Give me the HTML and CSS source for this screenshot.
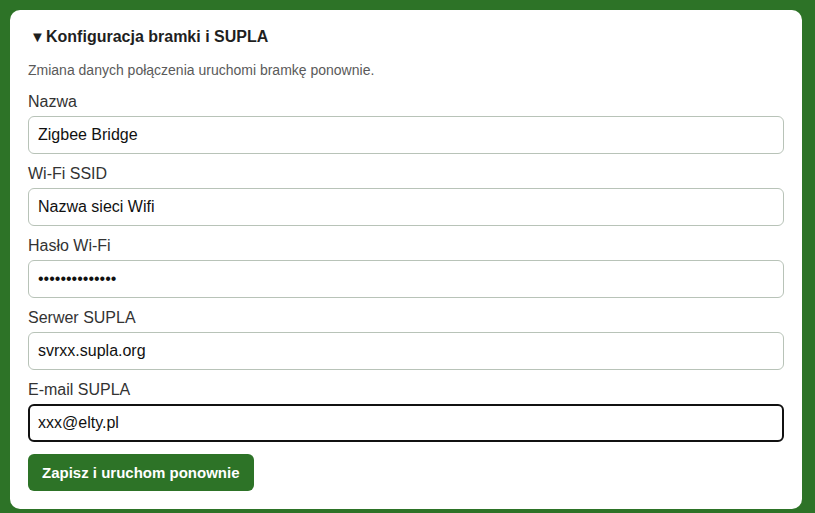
FILE: index.html
```html
<!DOCTYPE html>
<html lang="pl">
<head>
    <meta charset="UTF-8">
    <title>Konfiguracja bramki</title>
    <link rel="stylesheet" href="styles.css">
</head>
<body>

<div class="card">
    <div class="card-title"><span class="marker">&#9660;</span>Konfiguracja bramki i SUPLA</div>
    <p class="hint">Zmiana danych połączenia uruchomi bramkę ponownie.</p>
    <form id="form">
        <label for="name">Nazwa</label>
        <input id="name" type="text" value="Zigbee Bridge">

        <label for="ssid">Wi-Fi SSID</label>
        <input id="ssid" type="text" value="Nazwa sieci Wifi">

        <label for="pass">Hasło Wi-Fi</label>
        <input id="pass" type="password" value="abcdefghijklmn">

        <label for="server">Serwer SUPLA</label>
        <input id="server" type="text" value="svrxx.supla.org">

        <label for="email">E-mail SUPLA</label>
        <input id="email" class="active" type="text" value="xxx@elty.pl">

        <button type="submit">Zapisz i uruchom ponownie</button>
    </form>
</div>

</body>
</html>
```

FILE: styles.css
```css
body {
    margin: 0;
    padding: 10px;
    background-color: #2d7327;
    font-family: "Liberation Sans", Arial, sans-serif;
    font-size: 16px;
    color: #222;
}
.card {
    width: 756px;
    background-color: white;
    border-radius: 10px;
    padding: 17px 18px 18px 18px;
}
.card-title {
    font-size: 16px;
    font-weight: bold;
    line-height: 18px;
    color: #1f1f1f;
    margin-top: 1px;
}
.marker {
    font-size: 15px;
    display: inline-block;
    width: 16px;
    margin-left: 2px;
}
.hint {
    font-size: 14px;
    line-height: 16px;
    color: #5a5a5a;
    margin: 16px 0 0 0;
}
label {
    display: block;
    font-size: 16px;
    line-height: 18px;
    color: #333;
    margin-top: 11px;
    margin-bottom: 5px;
}
.hint + form label:first-child {
    margin-top: 15px;
}
input {
    display: block;
    box-sizing: border-box;
    width: 100%;
    height: 38px;
    padding: 0 9px;
    border: 1px solid #b8c3b8;
    border-radius: 6px;
    font-family: "Liberation Sans", Arial, sans-serif;
    font-size: 16px;
    color: #111;
    outline: none;
}
input.active {
    border: 2px solid #111;
    padding: 0 8px;
}
button {
    display: block;
    margin-top: 12px;
    height: 37px;
    padding: 0 14px;
    background-color: #2d7327;
    color: white;
    border: none;
    border-radius: 6px;
    font-family: "Liberation Sans", Arial, sans-serif;
    font-size: 15px;
    font-weight: bold;
    cursor: pointer;
}
```
